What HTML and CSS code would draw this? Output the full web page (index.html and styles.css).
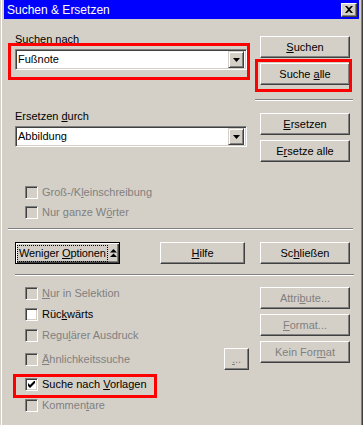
FILE: index.html
```html
<!DOCTYPE html>
<html lang="de">
<head>
    <meta charset="utf-8">
    <link rel="stylesheet" href="styles.css">
</head>
<body>
<div class="window">
    <div class="titlebar">
        <span class="title">Suchen &amp; Ersetzen</span>
        <span class="close"><svg width="8" height="7" viewBox="0 0 8 7"><path d="M0 0h2l2 2 2-2h2L5 3.5 8 7H6L4 5 2 7H0l3-3.5z" fill="#000"/></svg></span>
    </div>

    <div class="cols top">
        <div class="left">
            <div class="label label-search">Suchen nach</div>
            <div class="combo">
                <span class="value">Fußnote</span>
                <span class="drop"><svg width="7" height="4" viewBox="0 0 7 4"><path d="M0 0h7L3.5 4z" fill="#000"/></svg></span>
            </div>
            <div class="label label-replace">Ersetzen <u>d</u>urch</div>
            <div class="combo">
                <span class="value">Abbildung</span>
                <span class="drop"><svg width="7" height="4" viewBox="0 0 7 4"><path d="M0 0h7L3.5 4z" fill="#000"/></svg></span>
            </div>
            <div class="checks checks-top">
                <div class="check disabled"><span class="box"></span><span>Groß-/K<u>l</u>einschreibung</span></div>
                <div class="check disabled"><span class="box"></span><span>Nur ganze W<u>ö</u>rter</span></div>
            </div>
        </div>
        <div class="right">
            <button class="btn btn-search"><span><u>S</u>uchen</span></button>
            <button class="btn btn-next"><span>Suche <u>a</u>lle</span></button>
            <div class="sep"></div>
            <button class="btn btn-replace"><span><u>E</u>rsetzen</span></button>
            <button class="btn btn-next"><span>E<u>r</u>setze alle</span></button>
        </div>
    </div>

    <div class="groove groove-wide"></div>

    <div class="actions">
        <button class="btn btn-default"><span class="focus">Weniger <u>O</u>ptionen</span><svg class="less" width="7" height="8" viewBox="0 0 7 8"><path d="M3.5 0 7 3.5H0zM3.5 4.5 7 8H0z" fill="#000"/></svg></button>
        <button class="btn btn-help"><span><u>H</u>ilfe</span></button>
        <button class="btn btn-close"><span>Sc<u>h</u>ließen</span></button>
    </div>

    <div class="groove groove-narrow"></div>

    <div class="cols bottom">
        <div class="left">
            <div class="checks checks-bottom">
                <div class="check disabled"><span class="box"></span><span><u>N</u>ur in Selektion</span></div>
                <div class="check"><span class="box"></span><span>Rüc<u>k</u>wärts</span></div>
                <div class="check disabled"><span class="box"></span><span>Regu<u>l</u>ärer Ausdruck</span></div>
                <div class="check disabled with-btn"><span class="box"></span><span><u>Ä</u>hnlichkeitssuche</span><button class="btn btn-dots" disabled><span><u>.</u>..</span></button></div>
                <div class="check"><span class="box"><svg width="7" height="7" viewBox="0 0 7 7"><path d="M0 2 2 4 7-1V2L2 7 0 5z" fill="#000"/></svg></span><span>Suche nach <u>V</u>orlagen</span></div>
                <div class="check disabled"><span class="box"></span><span>Kommen<u>t</u>are</span></div>
            </div>
        </div>
        <div class="right">
            <button class="btn btn-first" disabled><span>Attri<u>b</u>ute...</span></button>
            <button class="btn btn-next" disabled><span><u>F</u>ormat...</span></button>
            <button class="btn btn-next" disabled><span>Kein For<u>m</u>at</span></button>
        </div>
    </div>

    <div class="mark mark-search"></div>
    <div class="mark mark-all"></div>
    <div class="mark mark-styles"></div>
</div>
</body>
</html>
```

FILE: styles.css
```css
* {
    box-sizing: border-box;
}
body {
    margin: 0;
    font-family: "Liberation Sans", Arial, sans-serif;
    font-size: 11px;
    line-height: 13px;
    color: #000;
    background: #fff;
}
u {
    text-decoration: underline;
    text-underline-offset: 1px;
}
.window {
    position: relative;
    width: 363px;
    height: 425px;
    overflow: hidden;
    padding: 0 4px;
    background: #d4d0c8;
    box-shadow: inset 1px 0 #d4d0c8, inset 2px 0 #fff, inset -1px 0 #404040, inset -2px 0 #808080;
}
.titlebar {
    height: 19px;
    display: flex;
    align-items: center;
    justify-content: space-between;
    padding: 0 2px 0 3px;
    background: #0000ff;
    color: #fff;
    font-size: 12px;
    line-height: 19px;
}
.title {
    padding-top: 1px;
}
.close {
    width: 16px;
    height: 14px;
    display: flex;
    align-items: center;
    justify-content: center;
    background: #d4d0c8;
    border: 1px solid;
    border-color: #fff #404040 #404040 #fff;
    box-shadow: inset -1px -1px #808080;
}

.cols {
    display: flex;
    align-items: flex-start;
    padding-left: 11px;
}
.left {
    width: 234px;
}
.right {
    width: 98px;
    margin-left: 6px;
}
.label-search {
    margin-top: 14px;
}
.label-replace {
    margin-top: 40px;
}
.combo {
    width: 232px;
    height: 21px;
    margin-top: 3px;
    display: flex;
    align-items: center;
    justify-content: space-between;
    padding: 0 2px 0 2px;
    background: #fff;
    border: 1px solid;
    border-color: #808080 #fff #fff #808080;
    box-shadow: inset 1px 1px #404040, inset -1px -1px #d4d0c8;
}
.drop {
    width: 16px;
    height: 17px;
    display: flex;
    align-items: center;
    justify-content: center;
    background: #d4d0c8;
    border: 1px solid;
    border-color: #d4d0c8 #404040 #404040 #d4d0c8;
    box-shadow: inset 1px 1px #fff, inset -1px -1px #808080;
}

.checks {
    display: flex;
    flex-direction: column;
}
.checks-top {
    margin-top: 39px;
    gap: 7px;
}
.checks-bottom {
    margin-top: 11px;
    gap: 8px;
}
.check {
    height: 13px;
    display: flex;
    align-items: center;
    padding-left: 10px;
    white-space: nowrap;
}
.check.disabled {
    color: #808080;
}
.check.with-btn {
    height: 22px;
    margin-top: -2px;
}
.box {
    width: 13px;
    height: 13px;
    margin-right: 4px;
    display: flex;
    align-items: center;
    justify-content: center;
    background: #fff;
    border: 1px solid;
    border-color: #808080 #fff #fff #808080;
    box-shadow: inset 1px 1px #404040, inset -1px -1px #d4d0c8;
}
.disabled .box {
    background: #d4d0c8;
}

.btn {
    width: 90px;
    height: 22px;
    display: flex;
    align-items: center;
    justify-content: center;
    padding: 0;
    font: inherit;
    color: #000;
    white-space: nowrap;
    background: #d4d0c8;
    border: 1px solid;
    border-color: #fff #404040 #404040 #fff;
    box-shadow: inset -1px -1px #808080;
}
.btn:disabled {
    color: #808080;
}
.right .btn {
    margin-left: 5px;
}
.btn-search {
    margin-top: 17px;
}
.btn-next {
    margin-top: 5px;
}
.btn-replace {
    margin-top: 12px;
}
.btn-first {
    margin-top: 11px;
}
.sep {
    height: 2px;
    margin-top: 14px;
    border-top: 1px solid #808080;
    border-bottom: 1px solid #fff;
}
.btn-dots {
    width: 25px;
    margin-left: auto;
}

.groove {
    height: 2px;
    border-top: 1px solid #808080;
    border-bottom: 1px solid #fff;
}
.groove-wide {
    margin: 9px 6px 0 4px;
}
.groove-narrow {
    margin: 10px 5px 0 11px;
}

.actions {
    display: flex;
    margin-top: 12px;
    padding-left: 11px;
}
.btn-default {
    width: 105px;
    justify-content: flex-start;
    padding-left: 3px;
    border-color: #000;
    box-shadow: inset 1px 1px #fff, inset -1px -1px #404040, inset -2px -2px #808080;
}
.focus {
    letter-spacing: -0.1px;
    outline: 1px dotted #000;
    outline-offset: 1px;
}
.less {
    margin-left: 4px;
    flex: none;
}
.btn-help {
    width: 85px;
    margin-left: 40px;
}
.btn-close {
    margin-left: 15px;
}

.mark {
    position: absolute;
    border: 3px solid #ff0000;
}
.mark-search {
    left: 8px;
    top: 43px;
    width: 242px;
    height: 37px;
}
.mark-all {
    left: 255px;
    top: 59px;
    width: 97px;
    height: 33px;
}
.mark-styles {
    left: 13px;
    top: 374px;
    width: 144px;
    height: 24px;
}
```
